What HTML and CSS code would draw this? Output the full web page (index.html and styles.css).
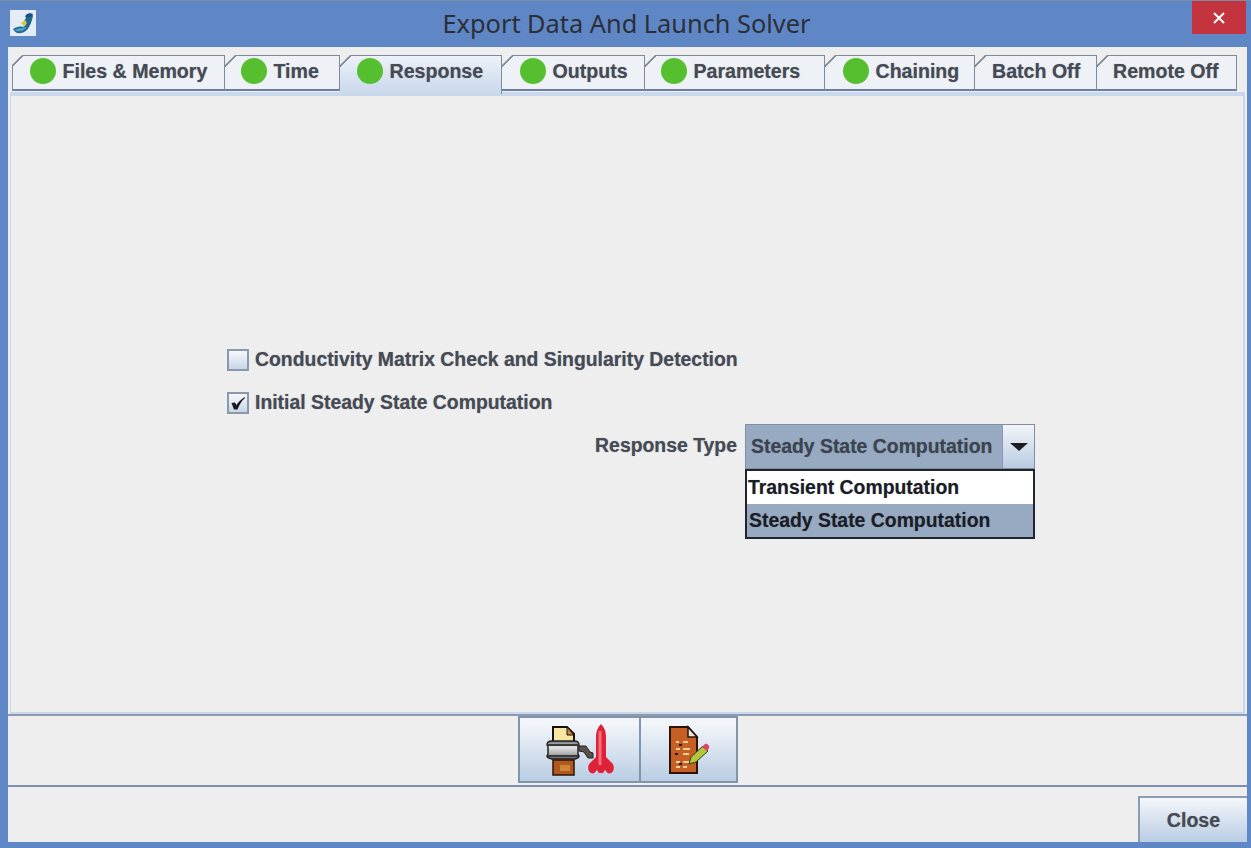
FILE: index.html
```html
<!DOCTYPE html>
<html lang="en">
<head>
<meta charset="utf-8">
<title>Export Data And Launch Solver</title>
<link rel="stylesheet" href="styles.css">
</head>
<body>
<div class="window">
  <header class="titlebar">
    <svg class="app-icon" viewBox="0 0 26 26" aria-hidden="true">
      <rect width="26" height="26" fill="#e4edf5"/>
      <path d="M3 19c3-2 7-3 10-2 2-1 3-2 3-4l-2-2 2-3c-1-1-1-2 0-3 3-2 7-1 7 1-1 4-2 8-4 11-2 4-7 7-11 6-2 0-4-2-5-4z" fill="#24678f"/>
      <path d="M16 5c2-2 5-2 7-1-1 2-3 4-7 3z" fill="#134f86"/>
      <path d="M11 13l4-3 2 3-3 3z" fill="#d3c93a"/>
      <path d="M4 20c4-2 8-2 13-3-2 3-6 5-10 4z" fill="#46a6cc"/>
    </svg>
    <h1 class="title">Export Data And Launch Solver</h1>
    <div class="close-x"><svg viewBox="0 0 14 14" width="14" height="14" aria-hidden="true"><path d="M2 2l10 10M12 2L2 12" stroke="#fff" stroke-width="2"/></svg></div>
  </header>
  <main class="client">
    <nav class="tabs">
      <div class="tab w-files"><span class="dot"></span>Files &amp; Memory</div>
      <div class="tab w-time"><span class="dot"></span>Time</div>
      <div class="tab tab-active w-resp"><span class="dot"></span>Response</div>
      <div class="tab w-out"><span class="dot"></span>Outputs</div>
      <div class="tab w-par"><span class="dot"></span>Parameters</div>
      <div class="tab w-chain"><span class="dot"></span>Chaining</div>
      <div class="tab w-batch">Batch Off</div>
      <div class="tab w-remote">Remote Off</div>
    </nav>
    <section class="panel">
      <label class="check-row"><span class="box"></span><span class="check-text">Conductivity Matrix Check and Singularity Detection</span></label>
      <label class="check-row second"><span class="box"><svg viewBox="0 0 14 14" width="14" height="14" aria-hidden="true"><path d="M0.500 7L4 6.500L5.500 9C7.500 6 10 3 14 1L14 2C10.500 5 8.500 8.500 6.500 13.500L3 13.500z" fill="#17171d"/></svg></span><span class="check-text">Initial Steady State Computation</span></label>
      <div class="combo-row">
        <span class="combo-label">Response Type</span>
        <div class="combo">
          <div class="combo-value">Steady State Computation</div>
          <div class="combo-arrow"><span class="tri"></span></div>
          <ul class="popup">
            <li>Transient Computation</li>
            <li class="sel">Steady State Computation</li>
          </ul>
        </div>
      </div>
    </section>
    <div class="toolbar">
      <button class="tool tool-a" type="button" aria-label="Export and launch">
        <svg viewBox="0 0 72 56" width="72" height="56" aria-hidden="true">
          <defs>
            <linearGradient id="steel" x1="0" y1="0" x2="0" y2="1">
              <stop offset="0" stop-color="#6f6f6f"/>
              <stop offset=".35" stop-color="#e6e6e6"/>
              <stop offset=".7" stop-color="#b0b0b0"/>
              <stop offset="1" stop-color="#5c5c5c"/>
            </linearGradient>
          </defs>
          <path d="M8 5h14l7 7v10H8z" fill="#f8e6a0" stroke="#15120c" stroke-width="2"/>
          <path d="M22 5l7 8h-7z" fill="#c98a3c" stroke="#15120c" stroke-width="1"/>
          <rect x="8" y="38" width="21" height="15" fill="#b5561d" stroke="#2b1407" stroke-width="1.500"/>
          <rect x="15" y="43" width="10" height="6" fill="#d49a4a" opacity=".7"/>
          <path d="M2 23q0-4 5-4h22q5 0 5 4l-1 1v8l1 2q0 2-4 3H7q-5-1-5-3l1-2v-8z" fill="url(#steel)" stroke="#222" stroke-width="1.500"/>
          <path d="M3 22h30v2H3zM3 33h30v2H3z" fill="#3a3a3a"/>
          <path d="M34 24h7l4 6 3 1v5h-5l-4-6-5-1z" fill="#5b5148" stroke="#222"/>
          <path d="M56 2c3 3 5 7 5 12v21l6 6c3 3 2 9-1 10-2 1-4 0-5-2l-1-1-2 3h-4l-2-3-1 1c-1 2-3 3-5 2-3-1-4-7-1-10l6-6V14c0-5 2-9 5-12z" fill="#de2238"/>
          <path d="M53.500 9h3v34h-3z" fill="#f9707e"/>
        </svg>
      </button>
      <button class="tool tool-b" type="button" aria-label="Edit file">
        <svg viewBox="0 0 44 50" width="44" height="50" aria-hidden="true">
          <path d="M3 2h18l9 10v36H3z" fill="#c65f24" stroke="#2b1407" stroke-width="2"/>
          <path d="M21 2v10h9z" fill="#e8e8e8" stroke="#2b1407" stroke-width="1.500"/>
          <g fill="#f2cf95"><rect x="9" y="16" width="3" height="2"/><rect x="16" y="16" width="5" height="2"/><rect x="9" y="23" width="4" height="2"/><rect x="16" y="23" width="7" height="2"/><rect x="16" y="28" width="6" height="2"/><rect x="9" y="36" width="4" height="2"/><rect x="16" y="36" width="6" height="2"/><rect x="9" y="41" width="4" height="2"/><rect x="16" y="41" width="4" height="2"/></g>
          <g fill="#34190a"><rect x="12" y="19" width="3" height="2"/><rect x="8" y="28" width="3" height="2"/><rect x="12" y="38" width="3" height="2"/></g>
          <path d="M24 32l12-11 5 5-12 11-7 2z" fill="#b2c83a" stroke="#3b3b1a" stroke-width="1"/>
          <path d="M35 22l3-3c2-1 5 2 4 4l-2 3z" fill="#de4660"/>
        </svg>
      </button>
    </div>
    <footer class="footer">
      <button class="close-btn" type="button">Close</button>
    </footer>
  </main>
</div>
</body>
</html>
```
FILE: styles.css
```css
* { box-sizing: border-box; }
html, body { margin: 0; height: 100%; }
body { overflow: hidden; background: #5f87c6; }

.window {
  width: 1251px;
  height: 848px;
  display: flex;
  flex-direction: column;
  background: #5f87c6;
  border-top: 1px solid #7a8ea8;
  padding: 0 4px 6px 8px;
  font-family: "Liberation Sans", Arial, sans-serif;
}

.titlebar {
  position: relative;
  height: 46px;
  flex: none;
  display: flex;
  align-items: flex-start;
  justify-content: center;
}
.app-icon {
  position: absolute;
  left: 2px;
  top: 9px;
  width: 26px;
  height: 26px;
}
.title {
  margin: 5px 0 0 -2px;
  font: 400 25.350px/34px "Noto Sans", "Open Sans", sans-serif;
  color: #2b2f38;
}
.close-x {
  position: absolute;
  right: 1px;
  top: 0;
  width: 54px;
  height: 33px;
  background: #c4343f;
  display: flex;
  align-items: center;
  justify-content: center;
}

.client {
  flex: 1;
  display: flex;
  flex-direction: column;
  background: #eeeeee;
  min-height: 0;
}

.tabs {
  flex: none;
  height: 45px;
  padding: 8px 0 0 2px;
  display: flex;
  align-items: flex-start;
  border-left: 2px solid #e6edf6;
}
.tab {
  height: 36px;
  padding-bottom: 3px;
  display: flex;
  align-items: center;
  border-top: 1px solid #7f8a9c;
  border-right: 1px solid #7f8a9c;
  border-bottom: 2px solid #6a7fa6;
  background-color: #eef1f5;
  background-image: linear-gradient(135deg, transparent 7px, #7f8a9c 7px, #7f8a9c 8.500px, transparent 8.500px);
  background-origin: border-box;
  background-clip: border-box;
  clip-path: polygon(10px 0, 100% 0, 100% 100%, 0 100%, 0 10px);
  font-size: 19.600px;
  font-weight: 700;
  color: #454a55;
  white-space: nowrap;
  text-shadow: 0 0 1px rgba(70, 70, 80, .5);
}
.dot {
  width: 26px;
  height: 26px;
  border-radius: 50%;
  background: #55bf2f;
  margin-right: 6.500px;
  flex: none;
}
.w-files { width: 213px; padding-left: 17px; border-left: 1px solid #7f8a9c; }
.w-time { width: 115px; padding-left: 16px; }
.w-resp {
  width: 162px;
  height: 39px;
  padding-left: 17px;
  padding-bottom: 8px;
  border-bottom: 0;
  background-image:
    linear-gradient(135deg, transparent 7px, #7f8a9c 7px, #7f8a9c 8.500px, transparent 8.500px),
    linear-gradient(#eef2f8, #c9d8ec);
}
.w-out { width: 143px; padding-left: 18px; }
.w-par { width: 180px; padding-left: 16px; }
.w-chain { width: 150px; padding-left: 18px; }
.w-batch { width: 122px; padding-left: 17px; }
.w-remote { width: 140px; padding-left: 16px; }

.panel {
  flex: none;
  height: 622px;
  margin: 0 2px 0 2px;
  border-style: solid;
  border-color: #c9d8ec;
  border-width: 4px 2px 2px 1px;
  background: #eeeeee;
  padding: 252px 0 0 216px;
  display: flex;
  flex-direction: column;
  color: #454a55;
  font-size: 19.400px;
  font-weight: 700;
  text-shadow: 0 0 1px rgba(70, 70, 80, .5);
}
.check-row {
  display: flex;
  align-items: center;
  height: 24px;
  white-space: nowrap;
}
.check-text { position: relative; top: -1px; }
.second { margin-top: 19px; }
.box {
  width: 22px;
  height: 22px;
  border: 2px solid #8a98ab;
  background: linear-gradient(#f6f8fb, #c7d6e8);
  margin-right: 6px;
  display: flex;
  align-items: center;
  justify-content: center;
  flex: none;
}
.combo-row {
  margin-top: 9px;
  padding-left: 367px;
  display: flex;
  align-items: center;
  gap: 8px;
}
.combo-label { white-space: nowrap; width: 143px; text-align: right; padding-bottom: 2px; }
.combo {
  position: relative;
  width: 290px;
  height: 45px;
  display: flex;
  border: 1px solid #7f8ea5;
}
.combo-value {
  flex: 1;
  background: #97aac1;
  display: flex;
  align-items: center;
  padding-left: 5px;
  white-space: nowrap;
  color: #3c4350;
}
.combo-arrow {
  width: 32px;
  background: linear-gradient(#f2f5f9, #b9cbe2);
  border-left: 1px solid #8a98ab;
  display: flex;
  align-items: center;
  justify-content: center;
}
.tri {
  width: 0;
  height: 0;
  border-left: 9px solid transparent;
  border-right: 9px solid transparent;
  border-top: 8px solid #1d1d24;
}
.popup {
  position: absolute;
  top: 44px;
  left: -1px;
  width: 290px;
  height: 70px;
  margin: 0;
  padding: 0;
  list-style: none;
  background: #fff;
  border: 2px solid #20242c;
  color: #1a1d26;
  z-index: 2;
}
.popup li {
  height: 33px;
  display: flex;
  align-items: center;
  padding-left: 1px;
  white-space: nowrap;
}
.popup .sel { background: #97aac1; padding-left: 2px; }

.toolbar {
  flex: none;
  height: 73px;
  padding-left: 1px;
  display: flex;
  justify-content: center;
  align-items: flex-start;
  border-top: 2px solid #8d9ab0;
  border-bottom: 2px solid #7e8fb4;
}
.tool {
  height: 67px;
  padding: 0;
  border: 2px solid #8296ab;
  background: linear-gradient(#f2f5f9 10%, #b9cde4);
  display: flex;
  align-items: center;
  justify-content: center;
}
.tool-a { width: 123px; }
.tool-b { width: 97px; }
.tool-b { border-left: 0; }
.tool-a svg { margin-left: 2px; }

.footer {
  flex: 1;
  display: flex;
  justify-content: flex-end;
  align-items: flex-end;
  min-height: 0;
}
.close-btn {
  width: 109px;
  height: 46px;
  border: 0;
  border-top: 2px solid #8a9cb2;
  border-left: 2px solid #8a9cb2;
  background: linear-gradient(#f4f6fa, #b9cde4);
  font: 700 19.600px "Liberation Sans", Arial, sans-serif;
  color: #454a55;
  text-shadow: 0 0 1px rgba(70, 70, 80, .5);
}
```
